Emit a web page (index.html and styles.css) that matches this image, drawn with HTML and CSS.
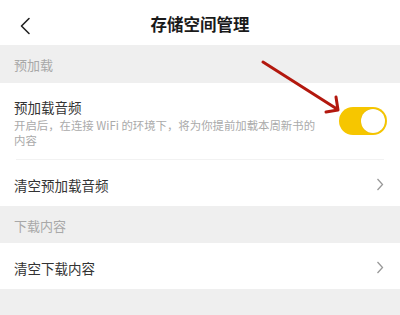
FILE: index.html
```html
<!DOCTYPE html>
<html lang="zh-CN">
<head>
<meta charset="utf-8">
<link rel="stylesheet" href="styles.css">
</head>
<body>
<div class="page">
  <header class="topbar">
    <svg class="back" width="12" height="18" viewBox="0 0 12 18"><path d="M10 1.5 L2.5 9 L10 16.5" fill="none" stroke="#222" stroke-width="1.6" stroke-linecap="round" stroke-linejoin="round"/></svg>
    <h1 class="title">存储空间管理</h1>
  </header>
  <div class="section">预加载</div>
  <div class="row row-toggle">
    <div class="row-text">
      <div class="row-title">预加载音频</div>
      <div class="row-sub">开启后，在连接 WiFi 的环境下，将为你提前加载本周新书的内容</div>
    </div>
    <div class="toggle"><div class="knob"></div></div>
  </div>
  <div class="divider"></div>
  <div class="row row-link">
    <span class="row-title">清空预加载音频</span>
    <svg class="chev" width="8" height="13" viewBox="0 0 8 13"><path d="M1.5 1 L6.5 6.5 L1.5 12" fill="none" stroke="#999" stroke-width="1.3"/></svg>
  </div>
  <div class="section section2">下载内容</div>
  <div class="row row-link">
    <span class="row-title">清空下载内容</span>
    <svg class="chev" width="8" height="13" viewBox="0 0 8 13"><path d="M1.5 1 L6.5 6.5 L1.5 12" fill="none" stroke="#999" stroke-width="1.3"/></svg>
  </div>
  <div class="rest"></div>
  <svg class="arrow" width="400" height="315" viewBox="0 0 400 315">
    <g stroke="#b3180e" stroke-width="3" stroke-linecap="round" fill="none">
      <path d="M263 62 L337 109"/>
      <path d="M336 97 L338 110 L326 112" stroke-linejoin="round"/>
    </g>
  </svg>
</div>
</body>
</html>
```

FILE: styles.css
```css
* { box-sizing: border-box; margin: 0; padding: 0; }
html, body { width: 400px; height: 315px; overflow: hidden; }
body {
  background: #efefef;
  font-family: "Noto Sans CJK SC", "Noto Sans", sans-serif;
  color: #333;
}
.page { position: relative; width: 400px; height: 315px; }
.topbar {
  height: 45px;
  background: #fff;
  display: flex;
  align-items: center;
  justify-content: center;
  position: relative;
}
.back { position: absolute; left: 19px; top: 17px; }
.title {
  font-size: 16.5px;
  font-weight: 700;
  color: #1a1a1a;
  line-height: 20px;
  margin-top: 2px;
}
.section {
  height: 38px;
  display: flex;
  align-items: center;
  padding-left: 14px;
  font-size: 13px;
  color: #a8a8a8;
}
.section2 { height: 37px; padding-top: 2px; }
.row {
  background: #fff;
  display: flex;
  align-items: center;
  padding: 0 16px 0 14px;
}
.row-toggle {
  padding-top: 15px;
  padding-bottom: 11px;
  justify-content: space-between;
  align-items: center;
}
.row-text { width: 312px; }
.row-title { font-size: 13.5px; color: #333; line-height: 18px; }
.row-sub {
  font-size: 11.4px;
  color: #aaa;
  line-height: 15px;
  margin-top: 2px;
}
.toggle {
  width: 48px;
  height: 28px;
  border-radius: 14px;
  background: #f6c600;
  position: relative;
  margin-right: -3px;
  margin-top: -4px;
}
.knob {
  position: absolute;
  right: 2px;
  top: 2px;
  width: 24px;
  height: 24px;
  border-radius: 50%;
  background: #fff;
  box-shadow: 0 0 1px rgba(0,0,0,0.15);
}
.divider { height: 1px; background: #fff; padding: 0 16px; }
.divider::before { content: ""; display: block; height: 1px; background: #f2f2f2; }
.row-link {
  height: 46px;
  justify-content: space-between;
  padding-top: 3px;
}
.chev { margin-right: 0; }
.rest { height: 24px; }
.arrow { position: absolute; left: 0; top: 0; pointer-events: none; }
```
